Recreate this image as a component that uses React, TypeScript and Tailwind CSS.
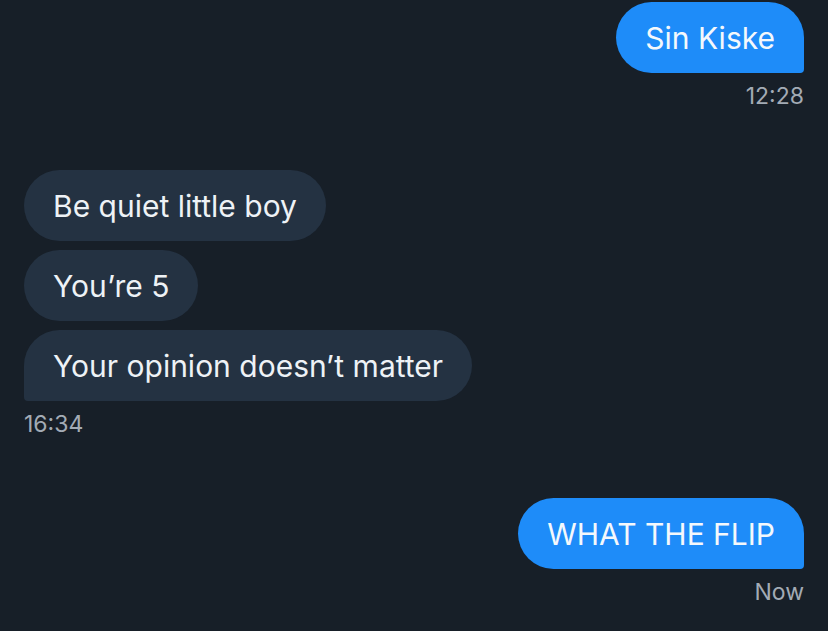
type Msg = { text: string; last?: boolean };

function Sent({ text, time }: { text: string; time: string }) {
  return (
    <div className="flex flex-col items-end">
      <div className="rounded-[36px] rounded-br-[4px] bg-[#1e8cf9] px-[29px] pt-[19px] pb-[17px] text-[30px] leading-[35px] text-[#f4f8fc]">
        {text}
      </div>
      <div className="mt-[10px] text-[23px] leading-[26px] text-[#a3abb5]">{time}</div>
    </div>
  );
}

function Received({ msgs, time }: { msgs: Msg[]; time: string }) {
  return (
    <div className="flex flex-col items-start gap-[9px]">
      {msgs.map((m, i) => (
        <div
          key={i}
          className={
            m.last
              ? "rounded-[36px] rounded-bl-[4px] bg-[#243242] px-[29px] pt-[19px] pb-[17px] text-[30px] leading-[35px] text-[#eef2f6]"
              : "rounded-[36px] bg-[#243242] px-[29px] pt-[19px] pb-[17px] text-[30px] leading-[35px] text-[#eef2f6]"
          }
        >
          {m.text}
        </div>
      ))}
      <div className="mt-[1px] text-[23px] leading-[26px] text-[#a3abb5]">{time}</div>
    </div>
  );
}

export default function App() {
  return (
    <div
      className="flex min-h-screen w-full flex-col gap-[61px] bg-[#171f28] px-[24px] pt-[2px]"
      style={{ fontFamily: "Inter, 'Noto Sans', sans-serif" }}
    >
      <Sent text="Sin Kiske" time="12:28" />
      <Received
        msgs={[
          { text: "Be quiet little boy" },
          { text: "You’re 5" },
          { text: "Your opinion doesn’t matter", last: true },
        ]}
        time="16:34"
      />
      <Sent text="WHAT THE FLIP" time="Now" />
    </div>
  );
}
